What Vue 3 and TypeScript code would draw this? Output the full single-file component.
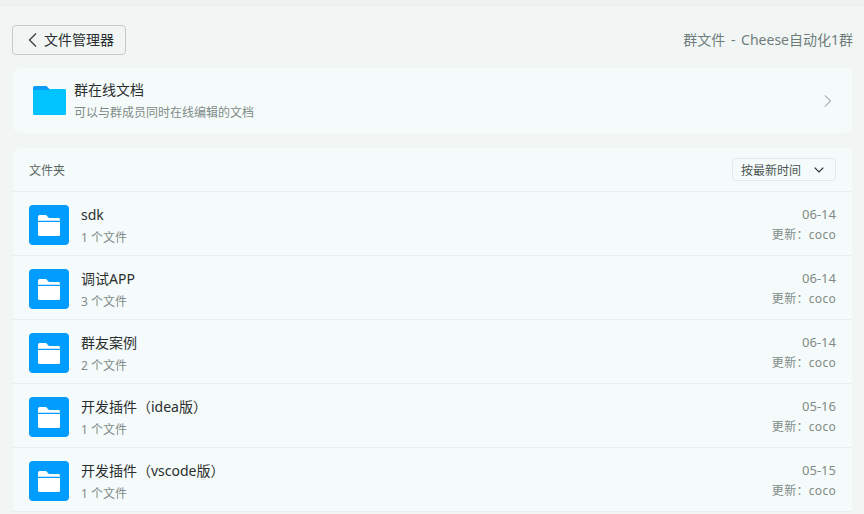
<script setup lang="ts">
interface Folder { name: string; count: number; date: string }
const folders: Folder[] = [
  { name: 'sdk', count: 1, date: '06-14' },
  { name: '调试APP', count: 3, date: '06-14' },
  { name: '群友案例', count: 2, date: '06-14' },
  { name: '开发插件（idea版）', count: 1, date: '05-16' },
  { name: '开发插件（vscode版）', count: 1, date: '05-15' },
]
</script>

<template>
  <div class="page">
    <div class="strip"></div>
    <header class="head">
      <button class="back">
        <svg width="10" height="16" viewBox="0 0 10 16"><path d="M8 1.500 L1.500 8 L8 14.500" fill="none" stroke="#3a3f3f" stroke-width="1.300"/></svg>
        <span class="back-label">文件管理器</span>
      </button>
      <div class="title">群文件 - Cheese自动化1群</div>
    </header>

    <section class="online">
      <svg class="bigfolder" width="35" height="31" viewBox="0 0 35 31">
        <path d="M1 2.500A1.500 1.500 0 0 1 2.500 1h12l4 4H1z" fill="#0a9cf5"/>
        <path d="M1 5h16l2-1h13.500A1.500 1.500 0 0 1 34 5.500v23A1.500 1.500 0 0 1 32.500 30h-30A1.500 1.500 0 0 1 1 28.500z" fill="#00c3ff"/>
      </svg>
      <div class="online-text">
        <div class="online-name">群在线文档</div>
        <div class="online-sub">可以与群成员同时在线编辑的文档</div>
      </div>
      <svg class="more" width="8" height="12" viewBox="0 0 8 12"><path d="M1 0.500 L6.500 6 L1 11.500" fill="none" stroke="#7b8685" stroke-width="1"/></svg>
    </section>

    <section class="list">
      <div class="list-head">
        <span class="list-title">文件夹</span>
        <div class="sort">
          <span>按最新时间</span>
          <svg width="10" height="6" viewBox="0 0 10 6"><path d="M0.700 0.700 L5 5 L9.300 0.700" fill="none" stroke="#2b2f2f" stroke-width="1.200"/></svg>
        </div>
      </div>
      <div v-for="f in folders" :key="f.name" class="row">
        <div class="ficon">
          <svg width="22" height="21" viewBox="0 0 22 21">
            <path d="M0 1.500A1.500 1.500 0 0 1 1.500 0h6.500l3 3h9.500A1.500 1.500 0 0 1 22 4.500v1.200H0z" fill="#fff"/>
            <path d="M0 7h22v12.500a1.500 1.500 0 0 1-1.500 1.500h-19A1.500 1.500 0 0 1 0 19.500z" fill="#fff"/>
          </svg>
        </div>
        <div class="info">
          <div class="name">{{ f.name }}</div>
          <div class="count">{{ f.count }} 个文件</div>
        </div>
        <div class="meta">
          <div class="date">{{ f.date }}</div>
          <div class="by">更新：coco</div>
        </div>
      </div>
    </section>
  </div>
</template>

<style>
html, body { margin: 0; padding: 0; background: #f1f6f5; overflow: hidden; }
</style>

<style scoped>
.page {
  width: 864px;
  height: 514px;
  overflow: hidden;
  background: #f1f6f5;
  font-family: "Noto Sans", "Noto Sans CJK SC", sans-serif;
  color: #2b2f2f;
  box-sizing: border-box;
}
.strip { height: 5px; background: #edf2f1; border-bottom: 1px solid #e9eeed; }
.head {
  display: flex;
  align-items: center;
  justify-content: space-between;
  padding: 19px 11px 0 12px;
  height: 30px;
  margin-bottom: 13px;
}
.back {
  width: 114px;
  height: 30px;
  box-sizing: border-box;
  display: flex;
  align-items: center;
  gap: 6px;
  padding: 0 0 0 15px;
  border: 1px solid #c4caca;
  border-radius: 4px;
  background: transparent;
  font: inherit;
  font-size: 14px;
  color: #2b2f2f;
}
.back-label { padding-bottom: 2px; }
.title { font-size: 14px; color: #6f7c7a; word-spacing: 2px; padding-bottom: 2px; }
.online {
  margin: 0 12px 0 13px;
  height: 65px;
  background: #f5fbfa;
  border-radius: 8px;
  display: flex;
  align-items: center;
  padding: 0 20px 0 19px;
  box-sizing: border-box;
}
.bigfolder { margin-right: 7px; }
.online-text { flex: 1; padding-top: 2px; }
.online-name { font-size: 14px; line-height: 20px; color: #2b2f2f; }
.online-sub { font-size: 12px; line-height: 20px; color: #7f8b89; margin-top: 3px; }
.list {
  margin: 15px 12px 0 13px;
  background: #f5fbfa;
  border-radius: 8px 8px 0 0;
}
.list-head {
  height: 44px;
  box-sizing: border-box;
  display: flex;
  align-items: center;
  justify-content: space-between;
  padding: 0 16px;
  border-bottom: 1px solid #e9efee;
}
.list-title { font-size: 12px; color: #5c6665; }
.sort {
  width: 104px;
  height: 23px;
  box-sizing: border-box;
  border: 1px solid #e3e9e8;
  border-radius: 4px;
  display: flex;
  align-items: center;
  justify-content: space-between;
  padding: 0 11px 0 8px;
  font-size: 12px;
  color: #4a5352;
}
.row {
  height: 64px;
  box-sizing: border-box;
  display: flex;
  align-items: flex-start;
  padding: 13px 16px 0;
  border-bottom: 1px solid #e9efee;
}
.ficon {
  width: 40px;
  height: 40px;
  border-radius: 4px;
  background: #009dff;
  display: flex;
  align-items: center;
  justify-content: center;
  margin-right: 12px;
}
.info { flex: 1; }
.name { font-size: 14px; line-height: 20px; color: #2b2f2f; }
.count { font-size: 12px; line-height: 20px; margin-top: 3px; color: #7f8b89; }
.meta { text-align: right; margin-top: -1px; }
.date { font-size: 13px; line-height: 20px; color: #7f8b89; }
.by { font-size: 12px; line-height: 20px; margin-top: 1px; color: #7f8b89; letter-spacing: 0.3px; }
</style>
